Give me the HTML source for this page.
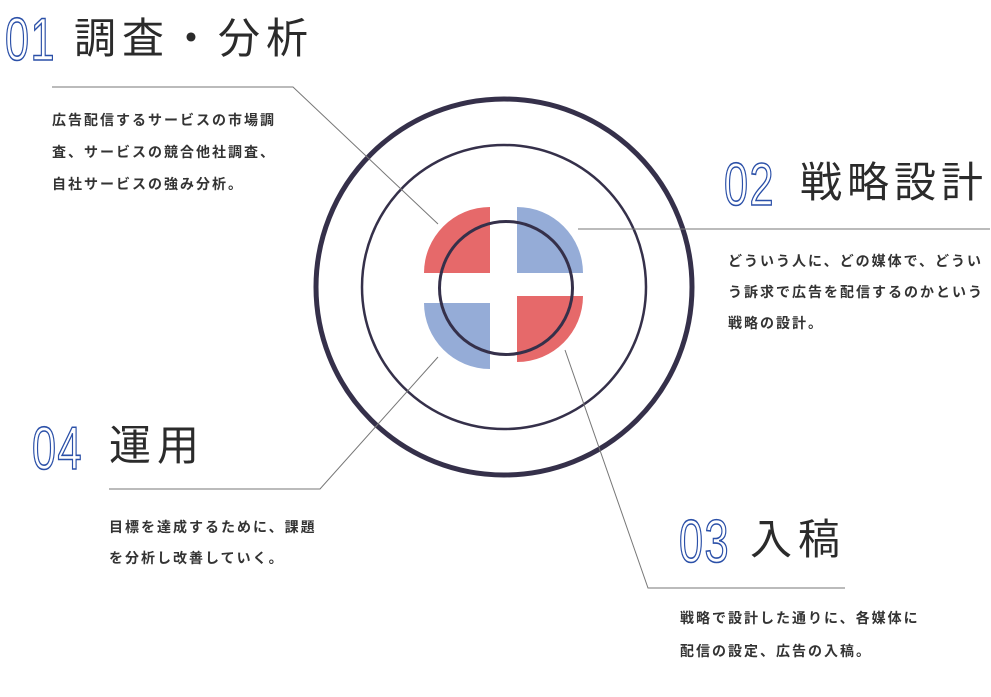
<!DOCTYPE html>
<html><head><meta charset="utf-8"><style>
html,body{margin:0;padding:0;background:#fff;width:991px;height:697px;overflow:hidden;position:relative;font-family:"Liberation Sans","Noto Sans CJK JP",sans-serif;}
.num{position:absolute;font-family:"Liberation Sans",sans-serif;font-size:60px;line-height:60px;color:transparent;-webkit-text-stroke:1.6px #2b50a8;transform:scaleX(0.72);transform-origin:0 0;letter-spacing:2px;}
.h{position:absolute;font-family:"Noto Sans CJK JP",sans-serif;font-weight:400;font-size:42px;line-height:50px;color:#2b2b2b;letter-spacing:6px;white-space:nowrap;}
.p{position:absolute;font-family:"Noto Sans CJK JP",sans-serif;font-weight:700;font-size:14px;letter-spacing:2px;color:#333;white-space:nowrap;}
</style></head><body>
<svg width="991" height="697" style="position:absolute;left:0;top:0">
<circle cx="504" cy="287" r="188" fill="none" stroke="#35304a" stroke-width="5"/>
<circle cx="504" cy="287" r="142" fill="none" stroke="#35304a" stroke-width="2.5"/>
<path d="M490 273 L424 273 A66 66 0 0 1 490 207 Z" fill="#e6696a"/>
<path d="M517 273 L517 207 A66 66 0 0 1 583 273 Z" fill="#95acd7"/>
<path d="M490 303 L490 369 A66 66 0 0 1 424 303 Z" fill="#95acd7"/>
<path d="M517 296 L583 296 A66 66 0 0 1 517 362 Z" fill="#e6696a"/>
<circle cx="506" cy="288" r="66.5" fill="none" stroke="#35304a" stroke-width="3"/>
<g fill="none" stroke="#777" stroke-width="1">
<polyline points="52,87 293,87 438,224"/>
<polyline points="578,229 990,229"/>
<polyline points="565,350 648,588 845,588"/>
<polyline points="438,357 320,489 109,489"/>
</g>
</svg>
<div class="num" style="left:5px;top:10px">01</div>
<div class="h" style="left:74px;top:11px">調査・分析</div>
<div class="p" style="left:52px;top:104px;line-height:32px">広告配信するサービスの市場調<br>査、サービスの競合他社調査、<br>自社サービスの強み分析。</div>
<div class="num" style="left:724px;top:155px">02</div>
<div class="h" style="left:800px;top:155px;letter-spacing:5px">戦略設計</div>
<div class="p" style="left:728px;top:246px;line-height:31px">どういう人に、どの媒体で、どうい<br>う訴求で広告を配信するのかという<br>戦略の設計。</div>
<div class="num" style="left:32px;top:419px">04</div>
<div class="h" style="left:109px;top:418px">運用</div>
<div class="p" style="left:109px;top:512px;line-height:31px">目標を達成するために、課題<br>を分析し改善していく。</div>
<div class="num" style="left:679px;top:512px">03</div>
<div class="h" style="left:750px;top:512px">入稿</div>
<div class="p" style="left:680px;top:602px;line-height:33px">戦略で設計した通りに、各媒体に<br>配信の設定、広告の入稿。</div>
</body></html>
